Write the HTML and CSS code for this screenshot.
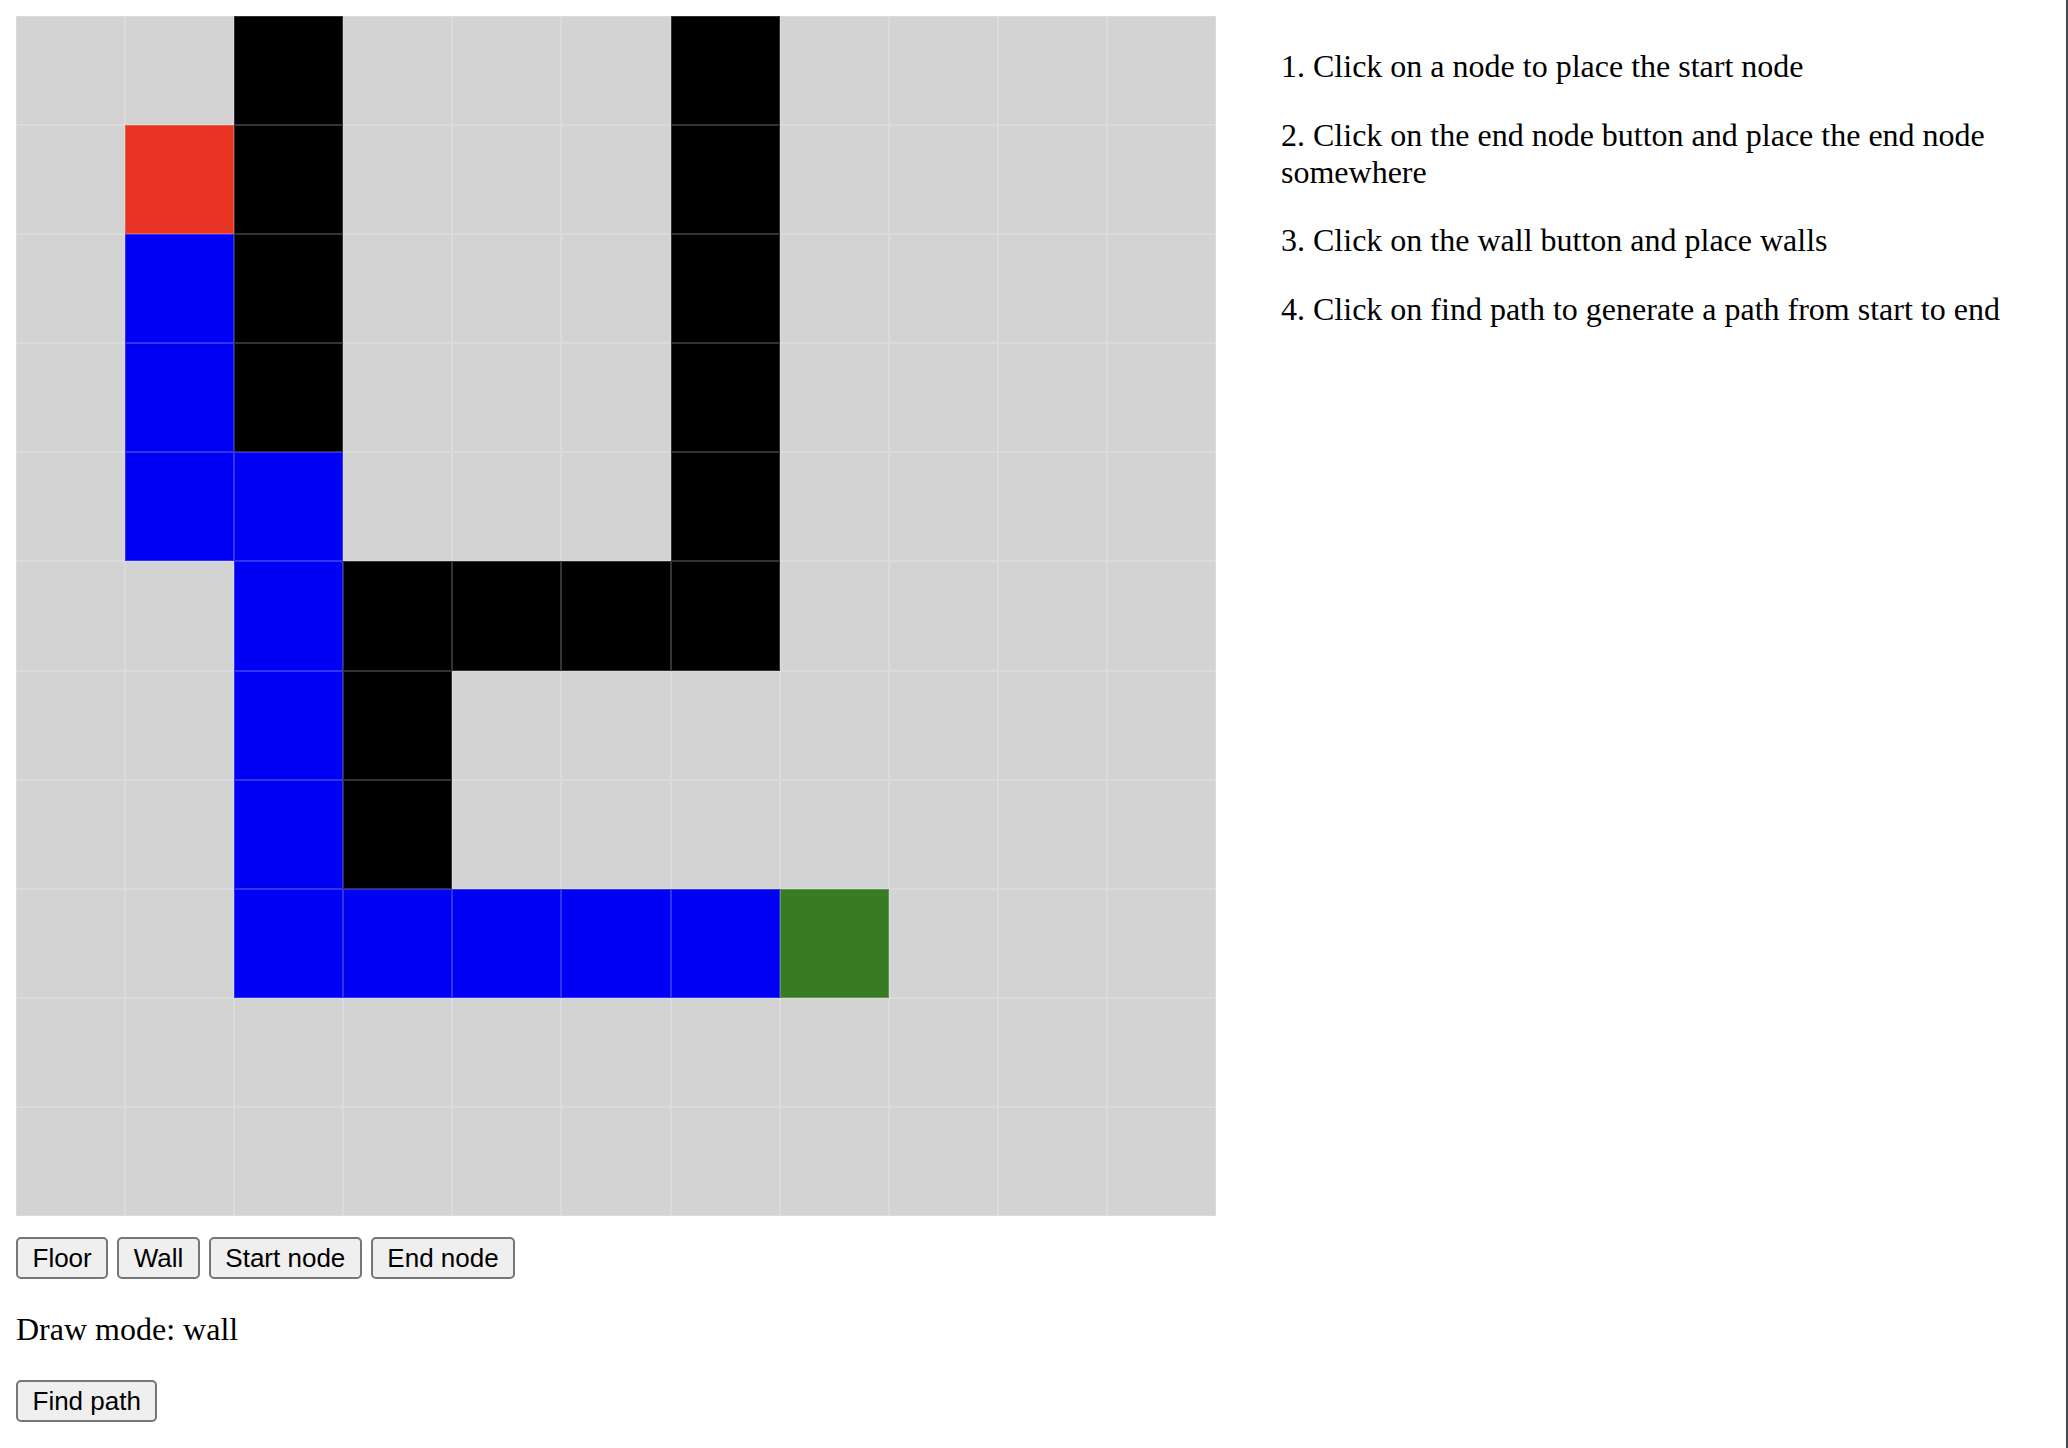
FILE: index.html
```html
<!DOCTYPE html>
<html lang="en">
<head>
<meta charset="utf-8">
<title>Pathfinder</title>
<link rel="stylesheet" href="styles.css">
</head>
<body>
<div class="app">
  <div class="left">
    <div class="grid">
      <div class="cell"></div><div class="cell"></div><div class="cell wall"></div><div class="cell"></div><div class="cell"></div><div class="cell"></div><div class="cell wall"></div><div class="cell"></div><div class="cell"></div><div class="cell"></div><div class="cell"></div>
      <div class="cell"></div><div class="cell start"></div><div class="cell wall"></div><div class="cell"></div><div class="cell"></div><div class="cell"></div><div class="cell wall"></div><div class="cell"></div><div class="cell"></div><div class="cell"></div><div class="cell"></div>
      <div class="cell"></div><div class="cell path"></div><div class="cell wall"></div><div class="cell"></div><div class="cell"></div><div class="cell"></div><div class="cell wall"></div><div class="cell"></div><div class="cell"></div><div class="cell"></div><div class="cell"></div>
      <div class="cell"></div><div class="cell path"></div><div class="cell wall"></div><div class="cell"></div><div class="cell"></div><div class="cell"></div><div class="cell wall"></div><div class="cell"></div><div class="cell"></div><div class="cell"></div><div class="cell"></div>
      <div class="cell"></div><div class="cell path"></div><div class="cell path"></div><div class="cell"></div><div class="cell"></div><div class="cell"></div><div class="cell wall"></div><div class="cell"></div><div class="cell"></div><div class="cell"></div><div class="cell"></div>
      <div class="cell"></div><div class="cell"></div><div class="cell path"></div><div class="cell wall"></div><div class="cell wall"></div><div class="cell wall"></div><div class="cell wall"></div><div class="cell"></div><div class="cell"></div><div class="cell"></div><div class="cell"></div>
      <div class="cell"></div><div class="cell"></div><div class="cell path"></div><div class="cell wall"></div><div class="cell"></div><div class="cell"></div><div class="cell"></div><div class="cell"></div><div class="cell"></div><div class="cell"></div><div class="cell"></div>
      <div class="cell"></div><div class="cell"></div><div class="cell path"></div><div class="cell wall"></div><div class="cell"></div><div class="cell"></div><div class="cell"></div><div class="cell"></div><div class="cell"></div><div class="cell"></div><div class="cell"></div>
      <div class="cell"></div><div class="cell"></div><div class="cell path"></div><div class="cell path"></div><div class="cell path"></div><div class="cell path"></div><div class="cell path"></div><div class="cell end"></div><div class="cell"></div><div class="cell"></div><div class="cell"></div>
      <div class="cell"></div><div class="cell"></div><div class="cell"></div><div class="cell"></div><div class="cell"></div><div class="cell"></div><div class="cell"></div><div class="cell"></div><div class="cell"></div><div class="cell"></div><div class="cell"></div>
      <div class="cell"></div><div class="cell"></div><div class="cell"></div><div class="cell"></div><div class="cell"></div><div class="cell"></div><div class="cell"></div><div class="cell"></div><div class="cell"></div><div class="cell"></div><div class="cell"></div>
    </div>
    <div class="modes">
      <button class="btn" type="button">Floor</button>
      <button class="btn" type="button">Wall</button>
      <button class="btn" type="button">Start node</button>
      <button class="btn" type="button">End node</button>
    </div>
    <p class="mode-text">Draw mode: wall</p>
    <button class="btn" type="button">Find path</button>
  </div>
  <ol class="steps">
    <li>Click on a node to place the start node</li>
    <li>Click on the end node button and place the end node somewhere</li>
    <li>Click on the wall button and place walls</li>
    <li>Click on find path to generate a path from start to end</li>
  </ol>
</div>
<div class="window-edge"></div>
</body>
</html>
```

FILE: styles.css
```css
html {
  background: #ffffff;
}

body {
  margin: 16px;
  font-family: "Liberation Serif", "Times New Roman", serif;
  font-size: 32px;
  color: #000000;
}

.app {
  display: flex;
  align-items: flex-start;
}

.left {
  flex: 0 0 1200px;
  display: flex;
  flex-direction: column;
  align-items: flex-start;
}

.grid {
  width: 1200px;
  height: 1200px;
  display: grid;
  grid-template-columns: repeat(11, 1fr);
  grid-template-rows: repeat(11, 1fr);
  background: #d3d3d3;
}

.cell {
  box-sizing: border-box;
  background: #d3d3d3;
  border: 1px solid rgba(255, 255, 255, 0.2);
}

.cell.wall {
  background: #000000;
}

.cell.path {
  background: #0000f5;
}

.cell.start {
  background: #e93424;
}

.cell.end {
  background: #377c22;
}

.modes {
  display: flex;
  gap: 9px;
  margin-top: 21px;
}

.btn {
  box-sizing: border-box;
  height: 42px;
  padding: 0 14.5px;
  border: 2px solid #767676;
  border-radius: 5px;
  background: #efefef;
  font-family: "Liberation Sans", Arial, sans-serif;
  font-size: 26px;
  color: #000000;
  line-height: 1;
}

.mode-text {
  margin: 32px 0;
  line-height: 1.15;
}

.steps {
  flex: 1;
  margin: 32px 0 0 0;
  padding-left: 65px;
  list-style-position: inside;
  line-height: 1.15;
}

.steps li + li {
  margin-top: 32px;
}

.window-edge {
  position: fixed;
  top: 0;
  right: 0;
  width: 2px;
  height: 100%;
  background: #45454c;
}
```
